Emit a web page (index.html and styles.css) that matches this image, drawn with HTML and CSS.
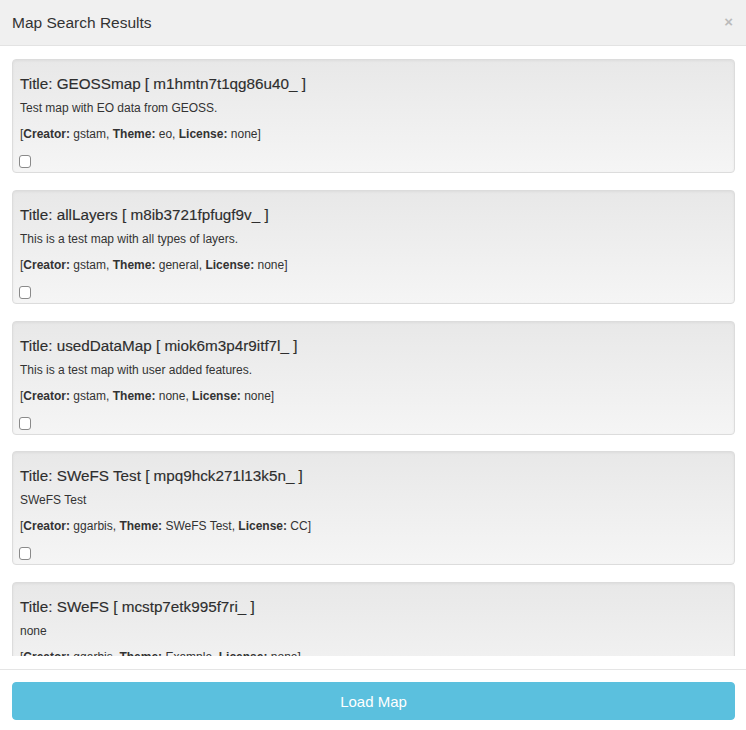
FILE: index.html
```html
<!DOCTYPE html>
<html>
<head>
<meta charset="utf-8">
<link rel="stylesheet" href="styles.css">
</head>
<body>
<div class="modal">
  <div class="modal-header">
    <h3 class="modal-title">Map Search Results</h3>
    <span class="close">&times;</span>
  </div>
  <div class="modal-body">
    <div class="results">
      <div class="well">
        <h4 class="map-title">Title: GEOSSmap [ m1hmtn7t1qg86u40_ ]</h4>
        <p class="desc">Test map with EO data from GEOSS.</p>
        <p class="meta">[<b>Creator:</b> gstam, <b>Theme:</b> eo, <b>License:</b> none]</p>
        <input type="checkbox" class="check">
      </div>
      <div class="well">
        <h4 class="map-title">Title: allLayers [ m8ib3721fpfugf9v_ ]</h4>
        <p class="desc">This is a test map with all types of layers.</p>
        <p class="meta">[<b>Creator:</b> gstam, <b>Theme:</b> general, <b>License:</b> none]</p>
        <input type="checkbox" class="check">
      </div>
      <div class="well">
        <h4 class="map-title">Title: usedDataMap [ miok6m3p4r9itf7l_ ]</h4>
        <p class="desc">This is a test map with user added features.</p>
        <p class="meta">[<b>Creator:</b> gstam, <b>Theme:</b> none, <b>License:</b> none]</p>
        <input type="checkbox" class="check">
      </div>
      <div class="well">
        <h4 class="map-title">Title: SWeFS Test [ mpq9hck271l13k5n_ ]</h4>
        <p class="desc">SWeFS Test</p>
        <p class="meta">[<b>Creator:</b> ggarbis, <b>Theme:</b> SWeFS Test, <b>License:</b> CC]</p>
        <input type="checkbox" class="check">
      </div>
      <div class="well">
        <h4 class="map-title">Title: SWeFS [ mcstp7etk995f7ri_ ]</h4>
        <p class="desc">none</p>
        <p class="meta">[<b>Creator:</b> ggarbis, <b>Theme:</b> Example, <b>License:</b> none]</p>
        <input type="checkbox" class="check">
      </div>
    </div>
  </div>
  <div class="modal-footer">
    <button class="btn-load" type="button">Load Map</button>
  </div>
</div>
</body>
</html>
```

FILE: styles.css
```css
html, body {
  margin: 0;
  padding: 0;
  background: #fff;
}
body {
  font-family: "Liberation Sans", Arial, Helvetica, sans-serif;
  color: #333;
}
.modal {
  width: 746px;
  height: 730px;
  display: flex;
  flex-direction: column;
  background: #fff;
}
.modal-header {
  height: 45px;
  flex: none;
  background: #f0f0f0;
  border-bottom: 1px solid #e3e3e3;
  display: flex;
  align-items: center;
  justify-content: space-between;
  padding: 0 13px 0 12px;
}
.modal-title {
  margin: 0;
  font-size: 15.5px;
  font-weight: normal;
  color: #333;
  line-height: 20px;
}
.close {
  font-size: 15px;
  font-weight: bold;
  color: #000;
  opacity: 0.22;
  line-height: 1;
  margin-top: -3px;
}
.modal-body {
  padding: 13px 11px 13px 12px;
  flex: none;
}
.results {
  height: 597px;
  overflow: hidden;
  display: flex;
  flex-direction: column;
  gap: 16.75px;
}
.well {
  flex: none;
  background-color: #f5f5f5;
  background-image: linear-gradient(to bottom, #e8e8e8 0, #f5f5f5 100%);
  border: 1px solid #dcdcdc;
  border-radius: 4px;
  box-shadow: inset 0 1px 3px rgba(0,0,0,.05), 0 1px 0 rgba(255,255,255,.1);
  padding: 14px 7px 4px 7px;
}
.map-title {
  margin: 0;
  font-size: 15.25px;
  font-weight: normal;
  line-height: 20px;
  color: #2e2e2e;
  -webkit-text-stroke: 0.15px #2e2e2e;
}
.desc, .meta {
  margin: 0;
  font-size: 12px;
  line-height: 17px;
}
.desc {
  margin-top: 6px;
}
.meta {
  margin-top: 9px;
}
.check {
  display: block;
  -webkit-appearance: none;
  appearance: none;
  width: 12px;
  height: 13px;
  margin: 12px 0 0 -1px;
  border: 1px solid #8a8a8a;
  border-radius: 3px;
  background: #fff;
  box-sizing: border-box;
}
.modal-footer {
  flex: none;
  border-top: 1px solid #e5e5e5;
  padding: 12px 11px 10px 12px;
}
.btn-load {
  display: block;
  width: 100%;
  height: 38px;
  border: 1px solid #5bc0de;
  border-radius: 4px;
  background: #5bc0de;
  color: #fff;
  font-family: "Liberation Sans", Arial, Helvetica, sans-serif;
  font-size: 15px;
  padding: 0;
}
```
